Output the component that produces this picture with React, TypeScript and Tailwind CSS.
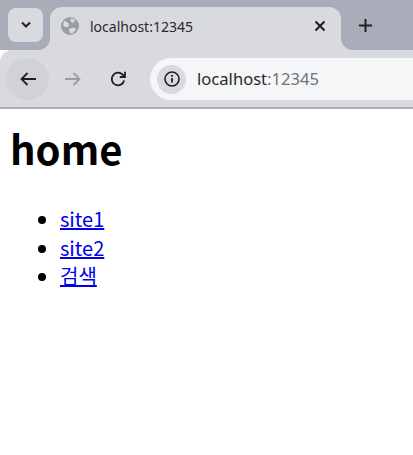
import React from "react";

const ui = { fontFamily: '"Noto Sans", "Open Sans", sans-serif' };
const page = { fontFamily: '"Noto Sans CJK KR", "Noto Sans", sans-serif' };

export default function App() {
  return (
    <div className="w-[413px] h-[455px] overflow-hidden bg-white flex flex-col">
      <div className="h-[50px] bg-[#a9acb9] flex items-start shrink-0" style={ui}>
        <div className="ml-2 mt-2 w-[35px] h-[34px] rounded-lg bg-[#d9dadf] flex items-center justify-center shrink-0">
          <svg width="12" height="8" viewBox="0 0 12 8" fill="none" stroke="#1f1f1f" strokeWidth="2"><path d="M2 1.500 6 5.500 10 1.500" /></svg>
        </div>
        <div className="relative ml-[7px] mt-[7px] w-[291px] h-[43px] rounded-t-xl bg-[#d9dadf] flex items-center shrink-0">
          <svg className="absolute left-[-12px] bottom-0" width="12" height="12" viewBox="0 0 12 12"><path d="M12 0V12H0A12 12 0 0 0 12 0Z" fill="#d9dadf" /></svg>
          <svg className="absolute right-[-12px] bottom-0" width="12" height="12" viewBox="0 0 12 12"><path d="M0 0V12H12A12 12 0 0 1 0 0Z" fill="#d9dadf" /></svg>
          <svg className="ml-[11px] mb-[6px] shrink-0" width="18" height="18" viewBox="0 0 18 18">
            <circle cx="9" cy="9" r="9" fill="#9a9da4" />
            <path d="M3 3.500 7.500 6 8 9 5 10.500 2 8ZM10 1 14.500 3 12 6 9.500 4.500ZM8 12l4-1.500 3.500 1.500L11 17 8.500 15Z" fill="#d9dadf" />
          </svg>
          <span className="ml-[11px] mb-[3px] text-[14px] text-[#2a2a2a] leading-none">localhost:12345</span>
          <svg className="ml-auto mr-[15px] mb-[6px]" width="12" height="12" viewBox="0 0 12 12" stroke="#1f1f1f" strokeWidth="2"><path d="M1.500 1.500 10.500 10.500M10.500 1.500 1.500 10.500" /></svg>
        </div>
        <div className="ml-[18px] mt-[19px] shrink-0">
          <svg className="block" width="13" height="13" viewBox="0 0 13 13" stroke="#1f1f1f" strokeWidth="2"><path d="M6.500 0V13M0 6.500H13" /></svg>
        </div>
      </div>
      <div className="h-[57px] bg-[#d9dadf] rounded-tl-xl flex items-center shrink-0" style={ui}>
        <div className="ml-[6px] w-[43px] h-[42px] rounded-full bg-[#d1d2d7] flex items-center justify-center shrink-0 mt-[1px]">
          <svg width="16" height="14" viewBox="0 0 16 14" fill="none" stroke="#1f1f1f" strokeWidth="1.800"><path d="M16 7H1.500M7.500 1 1.500 7l6 6" /></svg>
        </div>
        <div className="ml-[16px] shrink-0 flex items-center mt-[1px]">
          <svg width="16" height="14" viewBox="0 0 16 14" fill="none" stroke="#9a9ca2" strokeWidth="1.800"><path d="M0 7H14.500M8.500 1l6 6-6 6" /></svg>
        </div>
        <div className="ml-[29px] shrink-0 flex items-center mt-[1px]">
          <svg width="16" height="16" viewBox="0 0 16 16" fill="none" stroke="#1f1f1f" strokeWidth="1.800"><path d="M14.200 9.500A6.300 6.300 0 1 1 12.500 3.500L14.500 5.500" /><path d="M15 .8V6H9.800" /></svg>
        </div>
        <div className="ml-[24px] flex-1 h-[42px] rounded-l-full bg-[#f5f6f8] flex items-center mt-[1px]">
          <div className="ml-[7px] w-[29px] h-[29px] rounded-full bg-[#d9dadf] flex items-center justify-center shrink-0">
            <svg width="16" height="16" viewBox="0 0 16 16" fill="none">
              <circle cx="8" cy="8" r="7" stroke="#1f1f1f" strokeWidth="1.600" />
              <path d="M8 7v4.500" stroke="#1f1f1f" strokeWidth="1.800" />
              <circle cx="8" cy="4.800" r="1.100" fill="#1f1f1f" />
            </svg>
          </div>
          <span className="ml-[11px] text-[16.6px] leading-none whitespace-nowrap text-[#2a2a2a]">
            localhost<span className="text-[#6f7277]">:12345</span>
          </span>
        </div>
      </div>
      <div className="h-[2px] bg-[#b1b1b3] shrink-0" />
      <div className="px-[10px] pt-[10px] text-black" style={page}>
        <h1 className="text-[40px] font-bold leading-[58px]">home</h1>
        <ul className="list-disc pl-[50px] mt-[28px] text-[20px] leading-[28.500px]">
          <li><a href="#" className="text-[#0000ee] underline">site1</a></li>
          <li><a href="#" className="text-[#0000ee] underline">site2</a></li>
          <li><a href="#" className="text-[#0000ee] underline">검색</a></li>
        </ul>
      </div>
    </div>
  );
}
